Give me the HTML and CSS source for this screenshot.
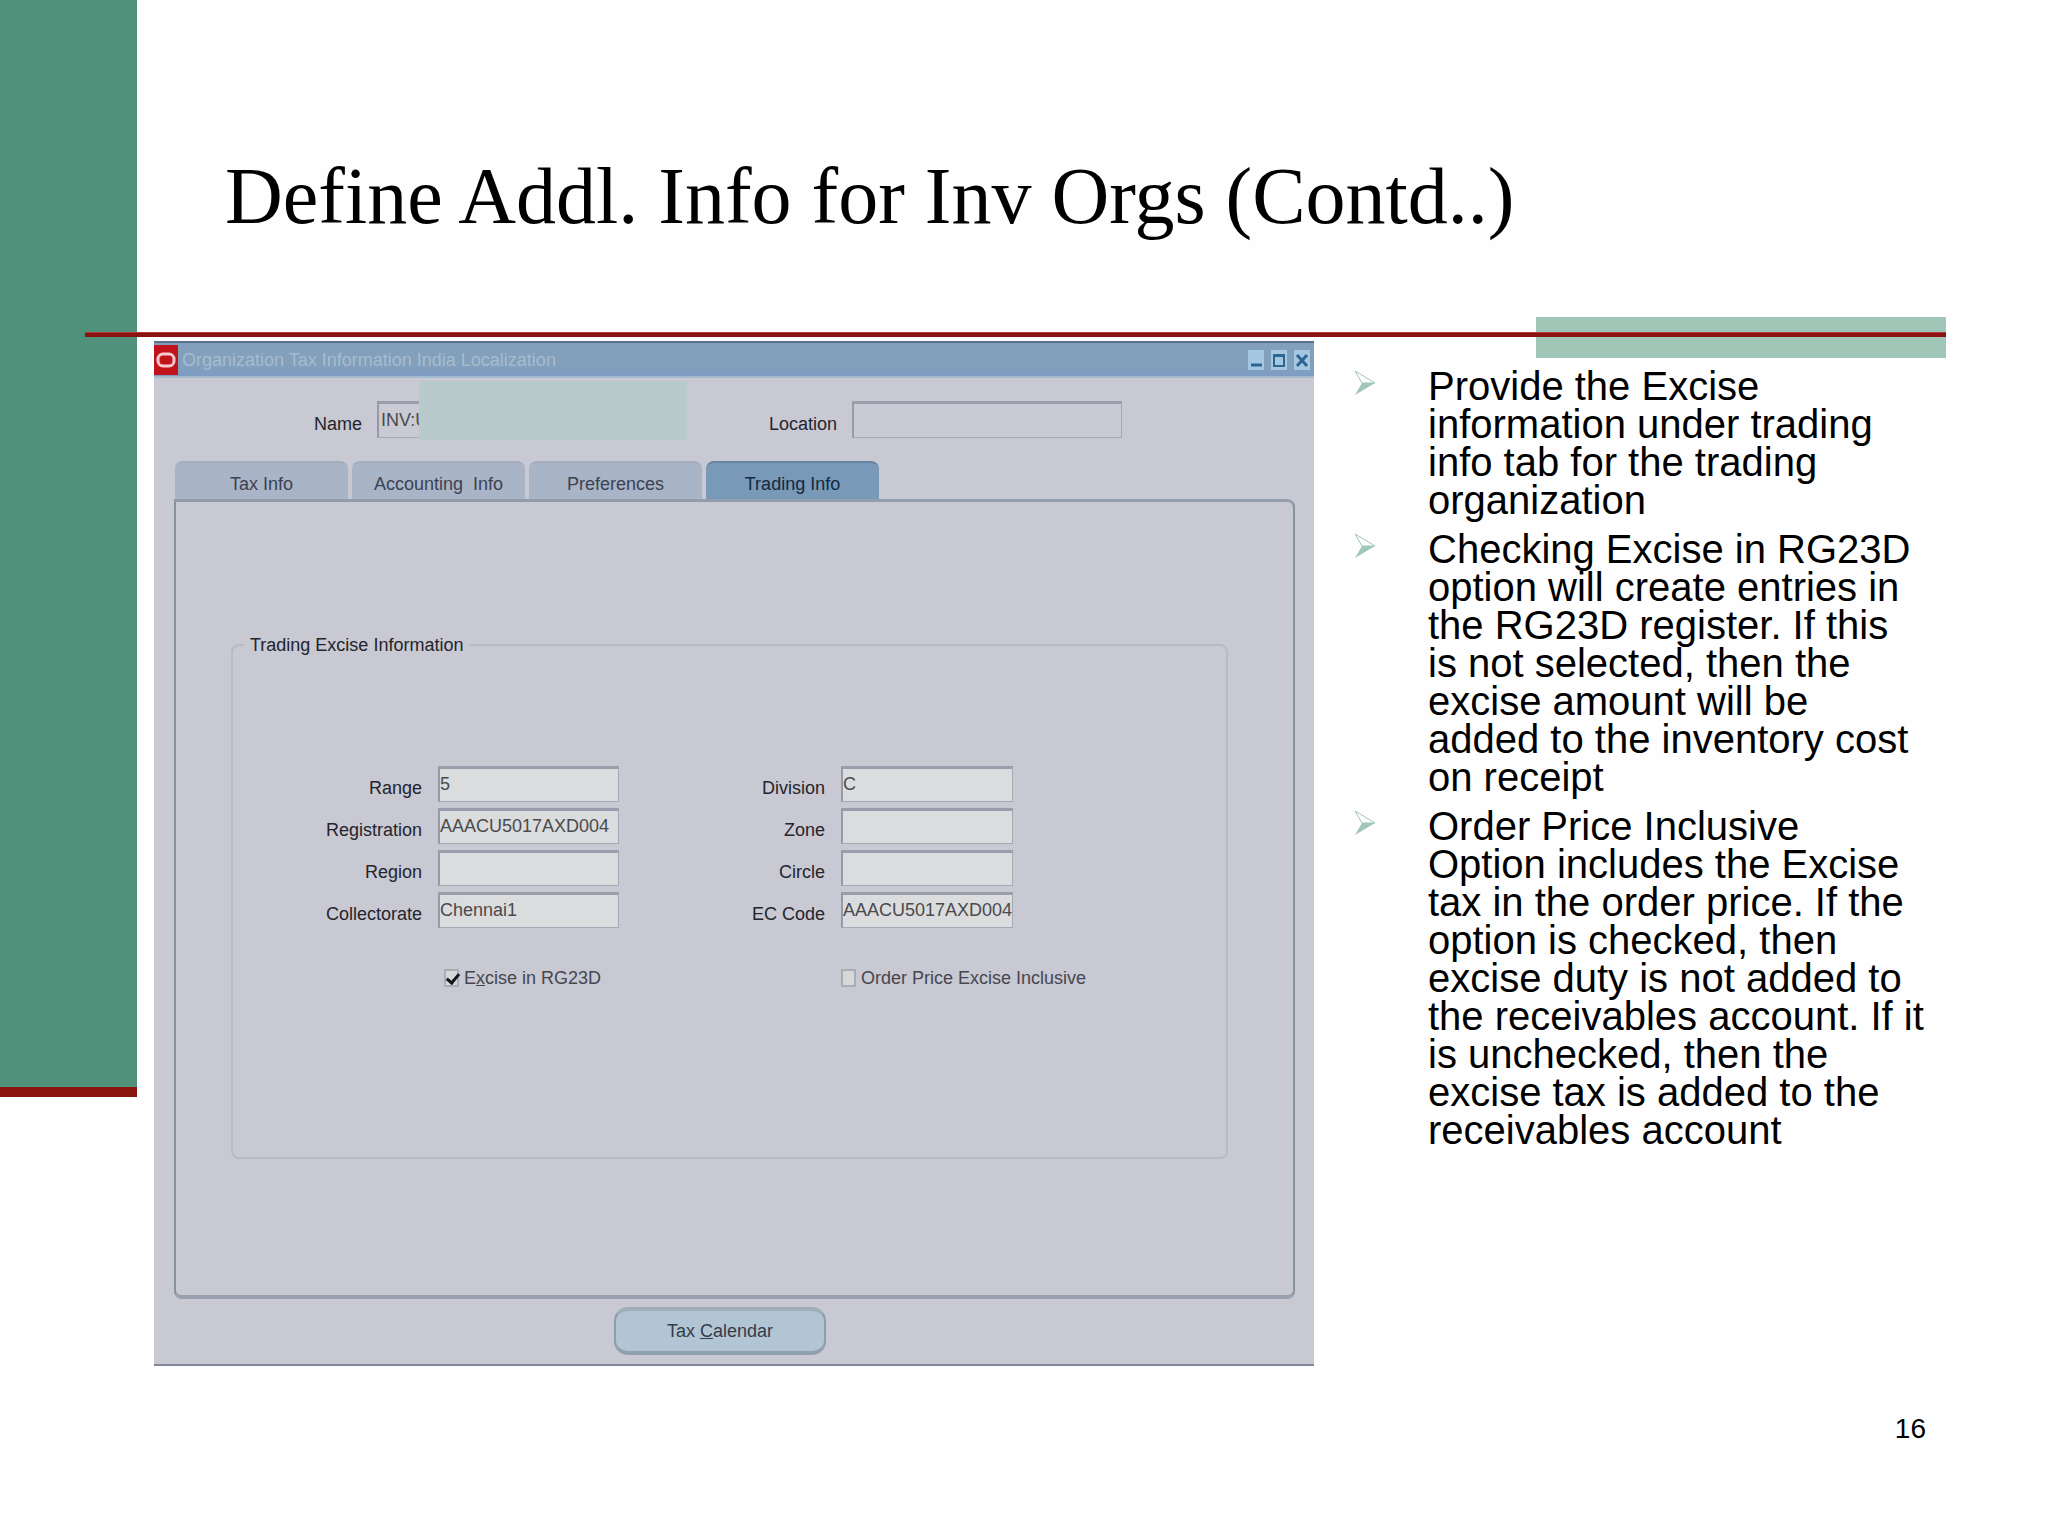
FILE: index.html
```html
<!DOCTYPE html>
<html lang="en">
<head>
  <meta charset="utf-8">
  <meta name="viewport" content="width=device-width">
  <title>Define Addl. Info for Inv Orgs (Contd..)</title>
  <link rel="stylesheet" href="styles.css">
</head>
<body>
  <div class="slide">
    <div class="band"></div>
    <main class="main">
      <h1 class="title">Define Addl. Info for Inv Orgs (Contd..)</h1>
      <div class="rule"></div>
      <div class="content">
        <section class="window">
          <header class="titlebar">
            <svg class="logo" viewBox="0 0 24 30">
              <rect width="24" height="30" fill="#c2121b"/>
              <rect x="4" y="9" width="16" height="12" rx="5" fill="none" stroke="#f6c9cc" stroke-width="3"/>
            </svg>
            <h2 class="caption">Organization Tax Information India Localization</h2>
            <button class="winbtn" type="button" aria-label="Minimize">
              <svg viewBox="0 0 16 20"><path d="M3 15h11" stroke="#2f6391" stroke-width="3"/></svg>
            </button>
            <button class="winbtn" type="button" aria-label="Maximize">
              <svg viewBox="0 0 16 20"><path d="M3 5h10v11H3zM3 6h10" fill="none" stroke="#2f6391" stroke-width="2"/></svg>
            </button>
            <button class="winbtn" type="button" aria-label="Close">
              <svg viewBox="0 0 16 20"><path d="M3 5l10 11M13 5L3 16" stroke="#2f6391" stroke-width="3"/></svg>
            </button>
          </header>

          <div class="org">
            <label class="org-name" for="name">Name</label>
            <div class="masked">
              <input class="field plain" id="name" type="text" value="INV:U">
              <span class="mask"></span>
            </div>
            <label class="org-loc" for="location">Location</label>
            <input class="field plain location" id="location" type="text">
          </div>

          <nav class="tabs">
            <button class="tab" type="button">Tax Info</button>
            <button class="tab" type="button">Accounting&nbsp; Info</button>
            <button class="tab" type="button">Preferences</button>
            <button class="tab active" type="button">Trading Info</button>
          </nav>

          <div class="panel">
            <fieldset class="group">
              <legend>Trading Excise Information</legend>
              <div class="fields">
                <label class="first" for="range">Range</label>
                <input class="field" id="range" type="text" value="5">
                <label for="division">Division</label>
                <input class="field" id="division" type="text" value="C">

                <label class="first" for="registration">Registration</label>
                <input class="field" id="registration" type="text" value="AAACU5017AXD004">
                <label for="zone">Zone</label>
                <input class="field" id="zone" type="text">

                <label class="first" for="region">Region</label>
                <input class="field" id="region" type="text">
                <label for="circle">Circle</label>
                <input class="field" id="circle" type="text">

                <label class="first" for="collectorate">Collectorate</label>
                <input class="field" id="collectorate" type="text" value="Chennai1">
                <label for="eccode">EC Code</label>
                <input class="field" id="eccode" type="text" value="AAACU5017AXD004">

                <label class="check check-left"><input type="checkbox" checked><span>E<u>x</u>cise in RG23D</span></label>
                <label class="check check-right"><input type="checkbox"><span>Order Price Excise Inclusive</span></label>
              </div>
            </fieldset>
          </div>

          <footer class="actions">
            <button class="calendar" type="button">Tax <u>C</u>alendar</button>
          </footer>
        </section>

        <ul class="notes">
          <li>
            <svg class="arrow" viewBox="0 0 22 26"><path d="M1 1l20 12H8z" fill="#fff" stroke="#a0c6b8"/><path d="M1 25l20-12H8z" fill="#a0c6b8"/></svg>
            <p>Provide the Excise information under trading info tab for the trading organization</p>
          </li>
          <li>
            <svg class="arrow" viewBox="0 0 22 26"><path d="M1 1l20 12H8z" fill="#fff" stroke="#a0c6b8"/><path d="M1 25l20-12H8z" fill="#a0c6b8"/></svg>
            <p>Checking Excise in RG23D option will create entries in the RG23D register. If this is not selected, then the excise amount will be added to the inventory cost on receipt</p>
          </li>
          <li>
            <svg class="arrow" viewBox="0 0 22 26"><path d="M1 1l20 12H8z" fill="#fff" stroke="#a0c6b8"/><path d="M1 25l20-12H8z" fill="#a0c6b8"/></svg>
            <p>Order Price Inclusive Option includes the Excise tax in the order price. If the option is checked, then excise duty is not added to the receivables account. If it is unchecked, then the excise tax is added to the receivables account</p>
          </li>
        </ul>
      </div>
      <p class="page">16</p>
    </main>
  </div>
</body>
</html>
```
FILE: styles.css
```css
* {
  box-sizing: border-box;
}
body {
  margin: 0;
  background: #fefefe;
  color: #000;
  font-family: "Liberation Sans", Arial, sans-serif;
}
.slide {
  display: grid;
  grid-template-columns: 137px minmax(0, 1fr);
  align-items: start;
}
.band {
  height: 1097px;
  background: #50917b;
  border-bottom: 10px solid #8a1410;
}
.main {
  position: relative;
}

/* heading and the line under it */
.title {
  margin: 0;
  padding: 150px 88px 90px;
  font: 80px/92px "Liberation Serif", "Times New Roman", serif;
}
.rule {
  position: relative;
  height: 5px;
  margin: 0 102px 4px -52px;
  background: #8a1212;
  border-top: 1px solid #b03a34;
}
/* pale block behind the right end of the line */
.rule::before {
  content: "";
  position: absolute;
  z-index: -1;
  top: -16px;
  right: 0;
  width: 410px;
  height: 41px;
  background: #a0c6b8;
}
.content {
  display: grid;
  grid-template-columns: minmax(0, 1160fr) minmax(0, 572fr);
  gap: 40px;
  align-items: start;
  padding: 0 122px 0 17px;
}

/* form window */
.window {
  background: #c8c9d2;
  border-bottom: 2px solid #80879a;
  color: #24242e;
  font-size: 18px;
  line-height: 22px;
}
.window button,
.window input {
  font: inherit;
  margin: 0;
}
.titlebar {
  display: flex;
  align-items: center;
  gap: 7px;
  height: 37px;
  padding-right: 4px;
  background: linear-gradient(#82a0bb 60%, #7f9dc3);
  border-top: 2px solid #53738f;
  border-bottom: 2px solid #a3bccd;
}
.logo {
  width: 24px;
  height: 30px;
}
.caption {
  flex: 1;
  margin: 0 0 0 -3px;
  color: #a6bccf;
  font-size: 18px;
  font-weight: normal;
}
.winbtn {
  width: 16px;
  height: 20px;
  padding: 0;
  border: 0;
  background: #a4c8e2;
}
.winbtn svg {
  display: block;
}
.field {
  width: 100%;
  height: 36px;
  padding: 0 0 1px;
  border: 1px solid #a4a9b6;
  border-top: 3px solid #9a9eac;
  border-left: 2px solid #959aa8;
  background: #dadcde;
  color: #4a4a4c;
}
.window .plain {
  height: 37px;
  padding-left: 2px;
  background: #c9cad3;
}
.org {
  display: flex;
  align-items: center;
  gap: 15px;
  padding: 23px 0;
}
.org label {
  padding-top: 8px;
  text-align: right;
}
.org-name {
  width: 208px;
}
.org-loc {
  width: 135px;
}
.masked {
  position: relative;
  width: 310px;
}
.masked .field {
  display: block;
}
.mask {
  position: absolute;
  top: -20px;
  right: 0;
  bottom: -2px;
  left: 42px;
  background: #b8cacc;
}
.location {
  flex: 0 1 270px;
}
.tabs {
  display: flex;
  gap: 4px;
  padding: 0 21px;
}
.tab {
  width: 173px;
  height: 38px;
  padding: 5px 0 0;
  border: 0;
  border-top: 2px solid #a2adbd;
  border-radius: 8px 8px 0 0;
  background: #a9b4c6;
  color: #3a4254;
}
.active {
  background: #7899b7;
  border-top-color: #6683a0;
  color: #14283f;
}
.panel {
  margin: 0 19px 0 20px;
  padding: 132px 65px 136px 55px;
  border: 2px solid #8691a1;
  border-top: 3px solid #929cac;
  border-bottom: 4px solid #98a1ad;
  border-radius: 0 8px 8px 8px;
}
.group {
  margin: 0;
  padding: 110px 0 168px;
  border: 2px solid #b7bbc6;
  border-radius: 8px;
}
.group legend {
  margin-left: 11px;
  padding: 0 6px;
}
.fields {
  display: grid;
  grid-template-columns: 189px 181px 190px 172px minmax(0, 1fr);
  gap: 6px 16px;
}
.fields > label {
  padding-top: 11px;
  text-align: right;
}
.fields > .first {
  grid-column: 1;
}
.fields > .check {
  display: flex;
  align-items: center;
  gap: 5px;
  padding-top: 33px;
  color: #45464f;
  text-align: left;
  white-space: nowrap;
}
.fields > .check-left {
  grid-column: 2;
  padding-left: 6px;
}
.fields > .check-right {
  grid-column: 4 / 6;
}
.check input {
  appearance: none;
  width: 15px;
  height: 18px;
  border: 2px solid #a9adb4;
  background: #d6d8da;
}
.check input:checked {
  position: relative;
}
.check input:checked::before {
  content: "";
  position: absolute;
  top: 0;
  left: 3px;
  width: 5px;
  height: 10px;
  border: solid #15151c;
  border-width: 0 3px 3px 0;
  transform: rotate(40deg);
}
.actions {
  display: flex;
  justify-content: center;
  padding: 8px 28px 9px 0;
}
.calendar {
  width: 212px;
  height: 48px;
  border: 2px solid #8b9dae;
  border-top: 4px solid #a0adba;
  border-bottom: 4px solid #8fa0af;
  border-radius: 14px;
  background: #b2c5d4;
  color: #343c48;
}

/* bullet text */
.notes {
  margin: 26px 0 0;
  padding: 0;
  list-style: none;
  font-size: 40px;
  line-height: 38px;
}
.notes li {
  display: grid;
  grid-template-columns: 22px minmax(0, 1fr);
  gap: 52px;
  margin-bottom: 11px;
}
.notes p {
  margin: 0;
}
.arrow {
  width: 22px;
  height: 26px;
  margin-top: 3px;
}
.page {
  margin: 47px 122px 0 0;
  font-size: 28px;
  line-height: 32px;
  text-align: right;
}
```
